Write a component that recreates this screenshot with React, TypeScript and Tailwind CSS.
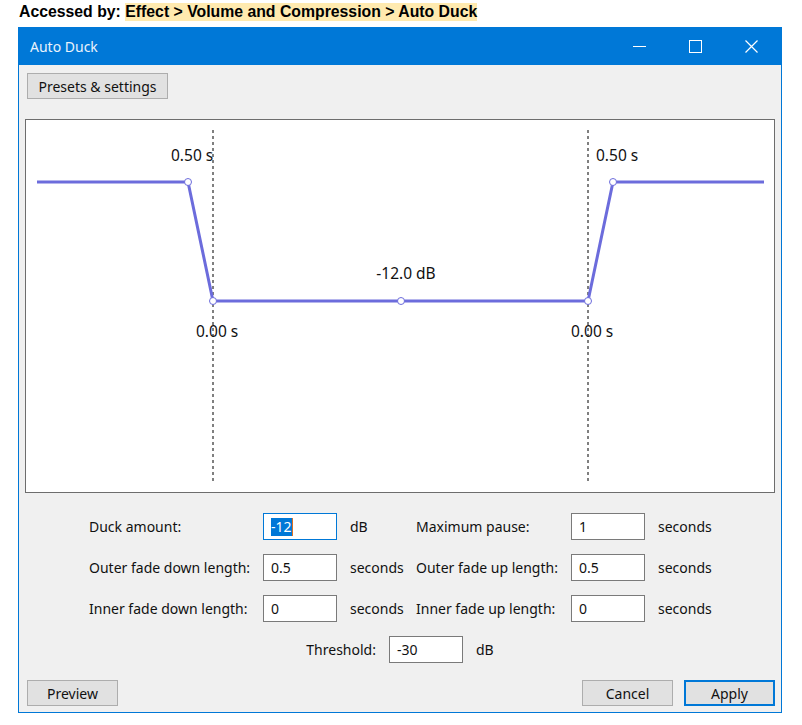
import React from "react";

const font = { fontFamily: '"Noto Sans", "Open Sans", sans-serif' };

function Field({ value, focused }: { value: string; focused?: boolean }) {
  return (
    <div
      className={`h-[27px] w-[74px] bg-white flex items-center px-[7px] text-[14px] text-[#111] ${
        focused ? "border border-[#0078d7]" : "border border-[#7a7a7a]"
      }`}
    >
      {focused ? (
        <span className="bg-[#0078d7] text-white leading-[18px] border-r border-[#e07020]">
          {value}
        </span>
      ) : (
        <span>{value}</span>
      )}
    </div>
  );
}

function Btn({ label, width, primary }: { label: string; width: string; primary?: boolean }) {
  return (
    <button
      className={`h-[26px] ${width} bg-[#e1e1e1] text-[14px] text-[#111] flex items-center justify-center ${
        primary ? "border-2 border-[#0078d7]" : "border border-[#adadad]"
      }`}
    >
      {label}
    </button>
  );
}

function Envelope() {
  const line = "#6c6cdc";
  return (
    <svg width="748" height="372" className="block">
      <line x1="187" y1="10" x2="187" y2="363" stroke="#000" strokeWidth="1" strokeDasharray="3 3" />
      <line x1="562" y1="10" x2="562" y2="363" stroke="#000" strokeWidth="1" strokeDasharray="3 3" />
      <polyline
        points="11,62 162,62 187,181 562,181 587,62 738,62"
        fill="none"
        stroke={line}
        strokeWidth="3"
      />
      {[
        [162, 62],
        [187, 181],
        [375, 181],
        [562, 181],
        [587, 62],
      ].map(([x, y], i) => (
        <circle key={i} cx={x} cy={y} r="3.5" fill="#fff" stroke={line} strokeWidth="1" />
      ))}
      <g fontSize="15.5" fill="#111" style={font}>
        <text x="145" y="41">0.50 s</text>
        <text x="570" y="41">0.50 s</text>
        <text x="380" y="159" textAnchor="middle">-12.0 dB</text>
        <text x="170" y="217">0.00 s</text>
        <text x="545" y="217">0.00 s</text>
      </g>
    </svg>
  );
}

export default function App() {
  return (
    <div className="w-[802px] h-[725px] bg-white relative overflow-hidden" style={font}>
      {/* caption line above the screenshot */}
      <div
        className="h-[27px] pl-[19px] pt-[3px] text-[15.8px] font-bold text-black leading-[18px] flex items-start"
        style={{ fontFamily: '"Liberation Sans", Arial, sans-serif' }}
      >
        <span>Accessed by:&nbsp;</span>
        <span className="bg-[#ffeaaf]">Effect &gt; Volume and Compression &gt; Auto Duck</span>
      </div>

      {/* dialog window */}
      <div className="ml-[18px] w-[764px] h-[686px] border border-[#0078d7] flex flex-col">
        <div className="h-[37px] bg-[#0078d7] flex items-center justify-between">
          <span className="pl-[11px] text-[14px] text-[#eaf3fc]">Auto Duck</span>
          <div className="flex items-center h-full">
            <div className="w-[56px] h-full flex items-center justify-center">
              <svg width="13" height="13">
                <line x1="0" y1="6.5" x2="13" y2="6.5" stroke="#fff" strokeWidth="1" />
              </svg>
            </div>
            <div className="w-[56px] h-full flex items-center justify-center">
              <svg width="13" height="13">
                <rect x="0.5" y="0.5" width="12" height="12" fill="none" stroke="#fff" strokeWidth="1" />
              </svg>
            </div>
            <div className="w-[56px] h-full flex items-center justify-center mr-[2px]">
              <svg width="13" height="13">
                <path d="M0.5 0.5 L12.5 12.5 M12.5 0.5 L0.5 12.5" stroke="#fff" strokeWidth="1.2" />
              </svg>
            </div>
          </div>
        </div>

        <div className="flex-1 bg-[#f0f0f0] flex flex-col">
          <div className="pl-[8px] pt-[8px]">
            <Btn label="Presets & settings" width="w-[141px]" />
          </div>

          <div className="ml-[6px] mt-[20px] w-[750px] h-[374px] bg-white border border-[#6d6d6d]">
            <Envelope />
          </div>

          {/* parameters */}
          <div className="mt-[20px] pl-[70px] grid grid-cols-[174px_74px_79px_155px_75px_1fr] gap-y-[14px] items-center text-[14px] text-[#111]">
            <span>Duck amount:</span>
            <Field value="-12" focused />
            <span className="pl-[13px]">dB</span>
            <span>Maximum pause:</span>
            <Field value="1" />
            <span className="pl-[12px]">seconds</span>

            <span>Outer fade down length:</span>
            <Field value="0.5" />
            <span className="pl-[13px]">seconds</span>
            <span>Outer fade up length:</span>
            <Field value="0.5" />
            <span className="pl-[12px]">seconds</span>

            <span>Inner fade down length:</span>
            <Field value="0" />
            <span className="pl-[13px]">seconds</span>
            <span>Inner fade up length:</span>
            <Field value="0" />
            <span className="pl-[12px]">seconds</span>
          </div>

          <div className="mt-[14px] flex items-center justify-center gap-[13px] text-[14px] text-[#111]">
            <span>Threshold:</span>
            <Field value="-30" />
            <span>dB</span>
          </div>

          <div className="mt-[17px] pl-[8px] pr-[6px] flex items-center justify-between">
            <Btn label="Preview" width="w-[91px]" />
            <div className="flex gap-[11px]">
              <Btn label="Cancel" width="w-[91px]" />
              <Btn label="Apply" width="w-[91px]" primary />
            </div>
          </div>
        </div>
      </div>
    </div>
  );
}
